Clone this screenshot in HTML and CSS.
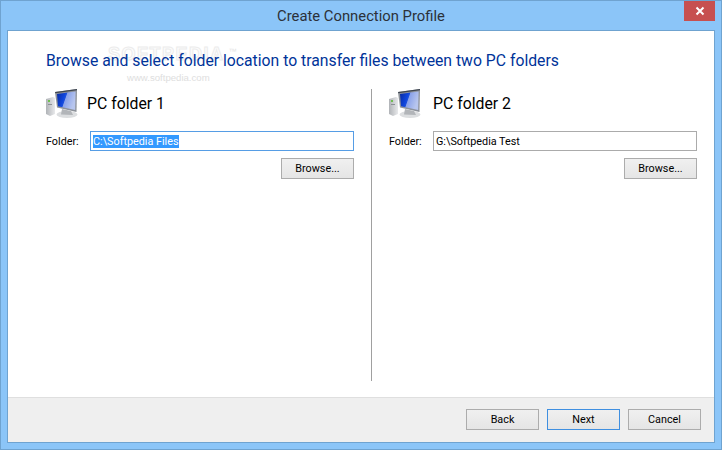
FILE: index.html
```html
<!DOCTYPE html>
<html lang="en">
<head>
<meta charset="utf-8">
<title>Create Connection Profile</title>
<link rel="stylesheet" href="styles.css">
</head>
<body>
<svg width="0" height="0" class="defs">
  <defs>
    <linearGradient id="scr" x1="0" y1="0" x2="1" y2="0.35">
      <stop offset="0" stop-color="#0a2a9c"/>
      <stop offset="0.42" stop-color="#0f45dc"/>
      <stop offset="0.5" stop-color="#1d50dc"/>
      <stop offset="0.54" stop-color="#8aa2ea"/>
      <stop offset="1" stop-color="#b8c6ee"/>
    </linearGradient>
    <linearGradient id="tower" x1="0" y1="0" x2="1" y2="0">
      <stop offset="0" stop-color="#b0b3b7"/>
      <stop offset="1" stop-color="#e8e9eb"/>
    </linearGradient>
    <symbol id="pc" viewBox="0 0 32 30">
      <ellipse cx="21" cy="25.5" rx="10.5" ry="3.5" fill="#dcdee0"/>
      <path d="M0 10 L7 8 L9 9 L9 25 L4 27 L0 25 Z" fill="url(#tower)"/>
      <rect x="2" y="11" width="2" height="2" fill="#6fbf50"/>
      <rect x="2" y="15" width="4" height="1" fill="#8d9196"/>
      <path d="M9 3 L31 0 L30.5 23 L11 18.5 Z" fill="#8d929a"/>
      <path d="M9 3 L31 0 L31 1.2 L9.3 4.2 Z" fill="#3f4650"/>
      <path d="M11 5 L29.6 2.4 L29.2 21 L12 17.2 Z" fill="url(#scr)"/>
      <path d="M16 20 L25 22 L27 26 L15 25.5 Z" fill="#b2b5b9"/>
    </symbol>
  </defs>
</svg>
<div class="window">
  <header class="titlebar">
    <span class="title">Create Connection Profile</span>
    <button class="close" aria-label="Close"><svg width="10" height="10" viewBox="0 0 10 10"><path d="M1.5 1.5 L8.5 8.5 M8.5 1.5 L1.5 8.5" stroke="#fff" stroke-width="2"/></svg></button>
  </header>
  <div class="client">
    <main class="content">
      <div class="watermark" aria-hidden="true"><span class="wm-big">SOFTPEDIA<span class="wm-tm">™</span></span><span class="wm-small">www.softpedia.com</span></div>
      <h1 class="heading">Browse and select folder location to transfer files between two PC folders</h1>
      <div class="columns">
        <section class="panel">
          <div class="panel-head">
            <svg class="pc" width="32" height="30"><use href="#pc"/></svg>
            <h2 class="panel-title">PC folder 1</h2>
          </div>
          <div class="field">
            <label class="label">Folder:</label>
            <div class="input focused"><span class="selected">C:\Softpedia Files</span></div>
          </div>
          <div class="browse-row"><button class="btn browse">Browse...</button></div>
        </section>
        <div class="divider"></div>
        <section class="panel panel-right">
          <div class="panel-head">
            <svg class="pc" width="32" height="30"><use href="#pc"/></svg>
            <h2 class="panel-title">PC folder 2</h2>
          </div>
          <div class="field">
            <label class="label">Folder:</label>
            <div class="input"><span>G:\Softpedia Test</span></div>
          </div>
          <div class="browse-row"><button class="btn browse">Browse...</button></div>
        </section>
      </div>
    </main>
    <footer class="footer">
      <button class="btn">Back</button>
      <button class="btn default">Next</button>
      <button class="btn">Cancel</button>
    </footer>
  </div>
</div>
</body>
</html>
```
FILE: styles.css
```css
* { box-sizing: border-box; }
html, body { margin: 0; padding: 0; }
body { width: 722px; height: 450px; overflow: hidden; font-family: Roboto, "Open Sans", sans-serif; }
.defs { position: absolute; }
.window {
  width: 722px; height: 450px;
  background: #8bc5f8;
  border: 1px solid #6fa3d0;
  display: flex; flex-direction: column;
  padding: 0 6px 6px 6px;
}
.titlebar { height: 29px; flex: none; display: flex; justify-content: center; align-items: center; position: relative; }
.title { font-size: 14.8px; color: #2b3138; }
.close {
  position: absolute; right: 0; top: 0;
  width: 31px; height: 20px;
  background: #c75050; border: 0; padding: 0;
  display: flex; align-items: center; justify-content: center;
}
.client {
  flex: 1; display: flex; flex-direction: column;
  background: #fff;
  border: 1px solid #6fa3d0;
}
.content { flex: 1; padding: 20px 18px 16px 38px; position: relative; display: flex; flex-direction: column; }
.watermark { position: absolute; left: 100px; top: 13px; display: flex; flex-direction: column; align-items: flex-start; pointer-events: none; }
.wm-big { font-family: "Liberation Sans", sans-serif; font-size: 18px; font-weight: 700; letter-spacing: 1.5px; line-height: 20px; color: #fdfdfd; -webkit-text-stroke: 1px #ececec; position: relative; white-space: nowrap; }
.wm-tm { position: absolute; left: 100%; top: -2px; font-size: 8px; font-weight: 400; letter-spacing: 0; color: #e4e4e4; -webkit-text-stroke: 0; margin-left: 4px; }
.wm-small { font-family: "Liberation Sans", sans-serif; font-size: 9.6px; line-height: 14px; color: #dedede; margin-top: 7px; margin-left: 19px; white-space: nowrap; }
.heading { margin: 0 0 18px; font-size: 15.75px; font-weight: 400; line-height: 20px; color: #003399; position: relative; white-space: nowrap; }
.columns { flex: 1; display: flex; }
.panel { width: 308px; flex: none; }
.divider { width: 1px; background: #a0a0a0; margin: 0 17px; flex: none; }
.panel-head { display: flex; align-items: center; gap: 9px; height: 30px; margin-bottom: 12px; }
.panel-right .panel-head { gap: 12px; }
.pc { flex: none; }
.panel-title { margin: 0 0 2px; font-size: 15.8px; font-weight: 400; color: #000; }
.field { display: flex; align-items: center; gap: 10px; height: 20px; }
.label { font-size: 10.8px; color: #000; width: 34px; flex: none; white-space: nowrap; }
.input {
  flex: 1; height: 20px; border: 1px solid #ababab; background: #fff;
  font-size: 10.8px; line-height: 13px; padding: 3px 2px 0; color: #000; white-space: nowrap;
}
.input.focused { border-color: #569de5; }
.selected { background: #3399ff; color: #fff; display: inline-block; height: 13px; }
.browse-row { display: flex; justify-content: flex-end; margin-top: 7px; }
.btn {
  width: 73px; height: 21px; padding: 0;
  border: 1px solid #acacac;
  background: linear-gradient(#f0f0f0, #e5e5e5);
  font: 10.8px Roboto, "Open Sans", sans-serif; color: #000;
}
.btn.default { border-color: #3f8fe0; }
.footer {
  height: 45px; flex: none; background: #efefef; border-top: 1px solid #dfdfdf;
  display: flex; justify-content: flex-end; gap: 8px;
  padding: 11px 13px 0 0;
}
```
